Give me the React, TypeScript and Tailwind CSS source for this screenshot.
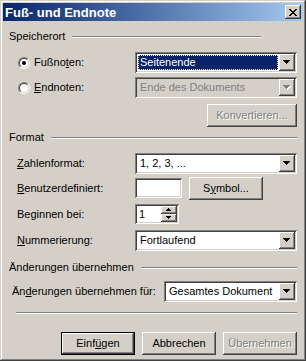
import React from "react";

const font = "font-['Liberation_Sans',Arial,sans-serif] text-[11px] leading-[13px]";
const raised =
  "shadow-[inset_-1px_-1px_#404040,inset_1px_1px_#ffffff,inset_-2px_-2px_#808080,inset_2px_2px_#d4d0c8]";
const sunken =
  "shadow-[inset_1px_1px_#808080,inset_-1px_-1px_#ffffff,inset_2px_2px_#404040,inset_-2px_-2px_#d4d0c8]";
const disabledText = "text-[#808080] [text-shadow:1px_1px_0_#ffffff]";

function Arrow({ disabled, up, small }: { disabled?: boolean; up?: boolean; small?: boolean }) {
  const rows = small ? [5, 3, 1] : [7, 5, 3, 1];
  const w = rows[0];
  const h = rows.length;
  const fill = disabled ? "#808080" : "#000000";
  return (
    <svg width={w + 1} height={h + 1} viewBox={`0 0 ${w + 1} ${h + 1}`} shapeRendering="crispEdges">
      {disabled &&
        rows.map((r, i) => (
          <rect key={"s" + i} x={(w - r) / 2 + 1} y={(up ? h - 1 - i : i) + 1} width={r} height={1} fill="#ffffff" />
        ))}
      {rows.map((r, i) => (
        <rect key={i} x={(w - r) / 2} y={up ? h - 1 - i : i} width={r} height={1} fill={fill} />
      ))}
    </svg>
  );
}

function Combo({
  value,
  className,
  selected,
  disabled,
}: {
  value: string;
  className: string;
  selected?: boolean;
  disabled?: boolean;
}) {
  return (
    <div className={`flex h-[21px] p-[2px] ${sunken} ${disabled ? "bg-[#d4d0c8]" : "bg-white"} ${className}`}>
      <div className="flex flex-1 min-w-0 items-center">
        {selected ? (
          <div className="m-[1px] self-stretch flex flex-1 items-center bg-[#0a246a] text-white border border-dotted border-[#ecebb5] pl-[1px]">
            {value}
          </div>
        ) : (
          <span className={`pl-[3px] ${disabled ? "text-[#808080]" : ""}`}>{value}</span>
        )}
      </div>
      <div className={`w-[16px] flex items-center justify-center bg-[#d4d0c8] ${raised}`}>
        <Arrow disabled={disabled} />
      </div>
    </div>
  );
}

function Radio({ checked }: { checked?: boolean }) {
  return (
    <span className="block w-[12px] h-[12px] rounded-full border border-t-[#808080] border-l-[#808080] border-b-white border-r-white">
      <span className="flex w-full h-full items-center justify-center rounded-full border border-t-[#404040] border-l-[#404040] border-b-[#d4d0c8] border-r-[#d4d0c8] bg-white">
        {checked && <span className="block w-[4px] h-[4px] rounded-full bg-black" />}
      </span>
    </span>
  );
}

function Button({
  children,
  className,
  disabled,
  isDefault,
}: {
  children: React.ReactNode;
  className: string;
  disabled?: boolean;
  isDefault?: boolean;
}) {
  const inner = (
    <div
      className={`flex h-full w-full items-center justify-center bg-[#d4d0c8] ${raised} ${disabled ? disabledText : ""}`}
    >
      {children}
    </div>
  );
  return (
    <div className={`h-[23px] ${isDefault ? "border border-black" : ""} ${className}`}>{inner}</div>
  );
}

function GroupHeader({ title, className, lineClass }: { title: string; className: string; lineClass: string }) {
  return (
    <div className={`flex h-[13px] items-center pl-[6px] pr-[6px] ${className}`}>
      <span>{title}</span>
      <div className={`ml-[7px] h-[2px] border-t border-t-[#808080] border-b border-b-white ${lineClass}`} />
    </div>
  );
}

function U({ children }: { children: React.ReactNode }) {
  return <span className="underline underline-offset-[1px]">{children}</span>;
}

function CloseIcon() {
  const rows: [number, number][][] = [
    [[0, 2], [6, 2]],
    [[1, 2], [5, 2]],
    [[2, 4]],
    [[3, 2]],
    [[2, 4]],
    [[1, 2], [5, 2]],
    [[0, 2], [6, 2]],
  ];
  return (
    <svg width="8" height="7" viewBox="0 0 8 7" shapeRendering="crispEdges">
      {rows.map((segs, y) =>
        segs.map(([x, w], i) => <rect key={y + "-" + i} x={x} y={y} width={w} height={1} fill="#000" />)
      )}
    </svg>
  );
}

export default function App() {
  return (
    <div
      className={`w-[306px] h-[361px] bg-[#d4d0c8] p-[3px] flex flex-col text-black ${font} shadow-[inset_-1px_-1px_#404040,inset_1px_1px_#d4d0c8,inset_-2px_-2px_#808080,inset_2px_2px_#ffffff]`}
    >
      {/* Title bar */}
      <div className="flex h-[18px] items-center justify-between bg-linear-to-r from-[#0a246a] to-[#a6caf0] pl-[2px] pr-[2px]">
        <span className="font-bold text-white text-[13px] leading-[15px]">Fuß- und Endnote</span>
        <div className={`flex w-[16px] h-[14px] items-center justify-center bg-[#d4d0c8] ${raised}`}>
          <CloseIcon />
        </div>
      </div>

      {/* Speicherort */}
      <GroupHeader title="Speicherort" className="mt-[9px]" lineClass="w-[189px] flex-none" />
      <div className="mt-[9px] flex h-[21px] items-center">
        <div className="flex w-[132px] items-center pl-[15px]">
          <Radio checked />
          <span className="ml-[4px]">
            Fußno<U>t</U>en:
          </span>
        </div>
        <Combo value="Seitenende" className="w-[162px]" selected />
      </div>
      <div className="mt-[4px] flex h-[21px] items-center">
        <div className="flex w-[132px] items-center pl-[15px]">
          <Radio />
          <span className="ml-[4px]">
            <U>E</U>ndnoten:
          </span>
        </div>
        <Combo value="Ende des Dokuments" className="w-[162px]" disabled />
      </div>
      <div className="mt-[6px] flex justify-end pr-[6px]">
        <Button className="w-[90px]" disabled>
          Konvertieren...
        </Button>
      </div>

      {/* Format */}
      <GroupHeader title="Format" className="mt-[4px]" lineClass="flex-1" />
      <div className="mt-[9px] flex h-[21px] items-center">
        <div className="w-[132px] pl-[14px]">
          <U>Z</U>ahlenformat:
        </div>
        <Combo value="1, 2, 3, ..." className="w-[162px]" />
      </div>
      <div className="mt-[3px] flex h-[22px] items-center">
        <div className="w-[132px] pl-[14px]">
          <U>B</U>enutzerdefiniert:
        </div>
        <div className={`h-[20px] w-[47px] bg-white ${sunken}`} />
        <Button className="ml-[7px] w-[74px] h-[22px]">
          S<U>y</U>mbol...
        </Button>
      </div>
      <div className="mt-[5px] flex h-[20px] items-center">
        <div className="w-[132px] pl-[14px]">Beginnen bei:</div>
        <div className={`flex h-[20px] w-[44px] bg-white p-[2px] ${sunken}`}>
          <span className="flex flex-1 items-center pl-[2px]">1</span>
          <div className="flex w-[16px] flex-col">
            <div className={`flex h-[8px] items-center justify-center bg-[#d4d0c8] ${raised}`}>
              <Arrow up small />
            </div>
            <div className={`flex h-[8px] items-center justify-center bg-[#d4d0c8] ${raised}`}>
              <Arrow small />
            </div>
          </div>
        </div>
      </div>
      <div className="mt-[6px] flex h-[21px] items-center">
        <div className="w-[132px] pl-[14px]">
          <U>N</U>ummerierung:
        </div>
        <Combo value="Fortlaufend" className="w-[162px]" />
      </div>

      {/* Änderungen übernehmen */}
      <GroupHeader title="Änderungen übernehmen" className="mt-[10px]" lineClass="flex-1" />
      <div className="mt-[7px] flex h-[21px] items-center">
        <div className="w-[161px] pl-[9px]">
          Än<U>d</U>erungen übernehmen für:
        </div>
        <Combo value="Gesamtes Dokument" className="w-[133px]" />
      </div>

      <div className="ml-[13px] mr-[6px] mt-[10px] h-[2px] border-t border-t-[#808080] border-b border-b-white" />

      <div className="mt-[18px] flex justify-end gap-[7px] pr-[6px]">
        <Button className="w-[74px]" isDefault>
          Einf<U>ü</U>gen
        </Button>
        <Button className="w-[74px]">Abbrechen</Button>
        <Button className="w-[74px]" disabled>
          Übernehmen
        </Button>
      </div>
    </div>
  );
}
